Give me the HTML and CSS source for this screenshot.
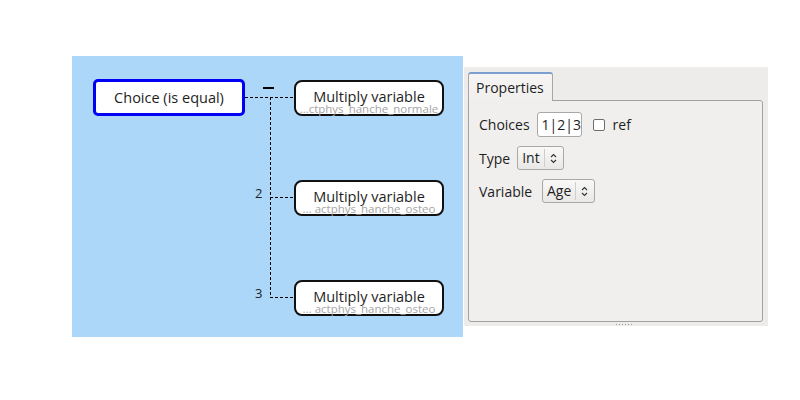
FILE: index.html
```html
<!DOCTYPE html>
<html lang="en">
<head>
  <meta charset="UTF-8" />
  <title>Choice editor</title>
  <link rel="stylesheet" href="styles.css">
</head>
<body>
  <div class="workspace">
    <div class="canvas">
      <svg class="wires" width="391" height="281">
        <g stroke="#000" stroke-width="1" stroke-dasharray="3 2" fill="none">
          <path d="M173 41.5 H222" />
          <path d="M198.5 41 V241" />
          <path d="M198 141.5 H222" />
          <path d="M198 241.5 H222" />
        </g>
        <path d="M191 32 H202" stroke="#000" stroke-width="2" />
      </svg>
      <span class="port-label lbl-2">2</span>
      <span class="port-label lbl-3">3</span>

      <div class="node choice">Choice (is equal)</div>

      <div class="node mult n1">
        <span class="title">Multiply variable</span>
        <span class="sub">…ctphys_hanche_normale</span>
      </div>
      <div class="node mult n2">
        <span class="title">Multiply variable</span>
        <span class="sub">... actphys_hanche_osteo</span>
      </div>
      <div class="node mult n3">
        <span class="title">Multiply variable</span>
        <span class="sub">... actphys_hanche_osteo</span>
      </div>
    </div>

    <div class="panel">
      <div class="tabs">
        <div class="tab">Properties</div>
      </div>
      <div class="pane">
        <div class="row">
          <span class="label">Choices</span>
          <span class="field">1|2|3</span>
          <span class="check"></span>
          <span class="label">ref</span>
        </div>
        <div class="row">
          <span class="label">Type</span>
          <span class="combo">
            <span class="value">Int</span>
            <span class="spin">
              <svg width="7" height="11" viewBox="0 0 7 11"><path d="M1 4 L3.5 1.5 L6 4 M1 7 L3.5 9.5 L6 7" stroke="#333" stroke-width="1.1" fill="none"/></svg>
            </span>
          </span>
        </div>
        <div class="row">
          <span class="label wide">Variable</span>
          <span class="combo">
            <span class="value">Age</span>
            <span class="spin">
              <svg width="7" height="11" viewBox="0 0 7 11"><path d="M1 4 L3.5 1.5 L6 4 M1 7 L3.5 9.5 L6 7" stroke="#333" stroke-width="1.1" fill="none"/></svg>
            </span>
          </span>
        </div>
      </div>
      <div class="grip">
        <i></i><i></i><i></i><i></i><i></i><i></i>
      </div>
    </div>
  </div>
</body>
</html>
```

FILE: styles.css
```css
body {
  margin: 0;
  background: #fff;
  font-family: 'Open Sans', 'DejaVu Sans', sans-serif;
  color: #1e1e1e;
}

.workspace {
  display: flex;
  align-items: flex-start;
  padding: 56px 0 0 72px;
}

/* diagram canvas */
.canvas {
  position: relative;
  width: 391px;
  height: 281px;
  background: #acd7f8;
}

.wires {
  position: absolute;
  left: 0;
  top: 0;
}

.port-label {
  position: absolute;
  left: 183px;
  font-size: 13px;
  line-height: 16px;
}

.lbl-2 { top: 129px; }
.lbl-3 { top: 229px; }

.node {
  position: absolute;
  box-sizing: border-box;
  background: #fff;
  display: flex;
  flex-direction: column;
  align-items: center;
  justify-content: center;
  font-size: 14.5px;
}

.choice {
  left: 21px;
  top: 23px;
  width: 152px;
  height: 37px;
  border: 3px solid #0000f5;
  border-radius: 5px;
  padding-bottom: 1px;
}

.mult {
  left: 222px;
  width: 150px;
  height: 36px;
  border: 2px solid #111;
  border-radius: 8px;
  justify-content: flex-start;
}

.n1 { top: 24px; }
.n2 { top: 124px; }
.n3 { top: 224px; }

.mult .title {
  line-height: 15px;
  margin-top: 7px;
}

.mult .sub {
  position: absolute;
  left: 0;
  right: 0;
  bottom: 0;
  font-size: 11.5px;
  line-height: 10px;
  color: #a6a6a6;
  text-align: center;
  white-space: nowrap;
}

/* properties panel */
.panel {
  margin-top: 11px;
  margin-left: 1px;
  width: 304px;
  height: 259px;
  box-sizing: border-box;
  background: #edeceb;
  padding: 5px 5px 0 4px;
  display: flex;
  flex-direction: column;
}

.tabs {
  display: flex;
}

.tab {
  height: 29px;
  box-sizing: border-box;
  padding: 5px 8px 0 7px;
  border: 1px solid #a7a6a4;
  border-top: 2px solid #7c9fcf;
  border-bottom: none;
  border-radius: 3px 3px 0 0;
  background: linear-gradient(#f6f5f4, #f0efee);
  font-size: 14px;
  line-height: 18px;
  margin-bottom: -1px;
  position: relative;
}

.pane {
  flex: 1;
  border: 1px solid #a2a1a0;
  border-radius: 0 3px 3px 3px;
  background: #f0efee;
  padding: 11px 10px;
  display: flex;
  flex-direction: column;
  gap: 9px;
}

.row {
  display: flex;
  align-items: center;
  gap: 7px;
  font-size: 14px;
}

.label.wide {
  min-width: 56px;
}

.field {
  width: 45px;
  height: 25px;
  box-sizing: border-box;
  border: 1px solid #a9a8a6;
  border-radius: 3px;
  background: #fff;
  padding: 0 4px;
  line-height: 23px;
  margin-right: 4px;
}

.check {
  width: 12px;
  height: 12px;
  box-sizing: border-box;
  border: 1px solid #6e6e6e;
  border-radius: 2px;
  background: #fff;
  margin-right: 1px;
}

.combo {
  display: flex;
  align-items: center;
  height: 24px;
  box-sizing: border-box;
  border: 1px solid #a9a8a6;
  border-radius: 3px;
  background: linear-gradient(#f8f8f7, #e9e8e6);
  padding: 0 6px 0 4px;
}

.combo .value {
  padding-right: 4px;
  border-right: 1px solid #cfcecc;
  line-height: 18px;
}

.combo .spin {
  display: flex;
  padding-left: 5px;
}

.grip {
  height: 4px;
  display: flex;
  justify-content: center;
  align-items: center;
  gap: 2px;
  margin-left: 16px;
}

.grip i {
  width: 1px;
  height: 1px;
  background: #9b9a98;
}
```
